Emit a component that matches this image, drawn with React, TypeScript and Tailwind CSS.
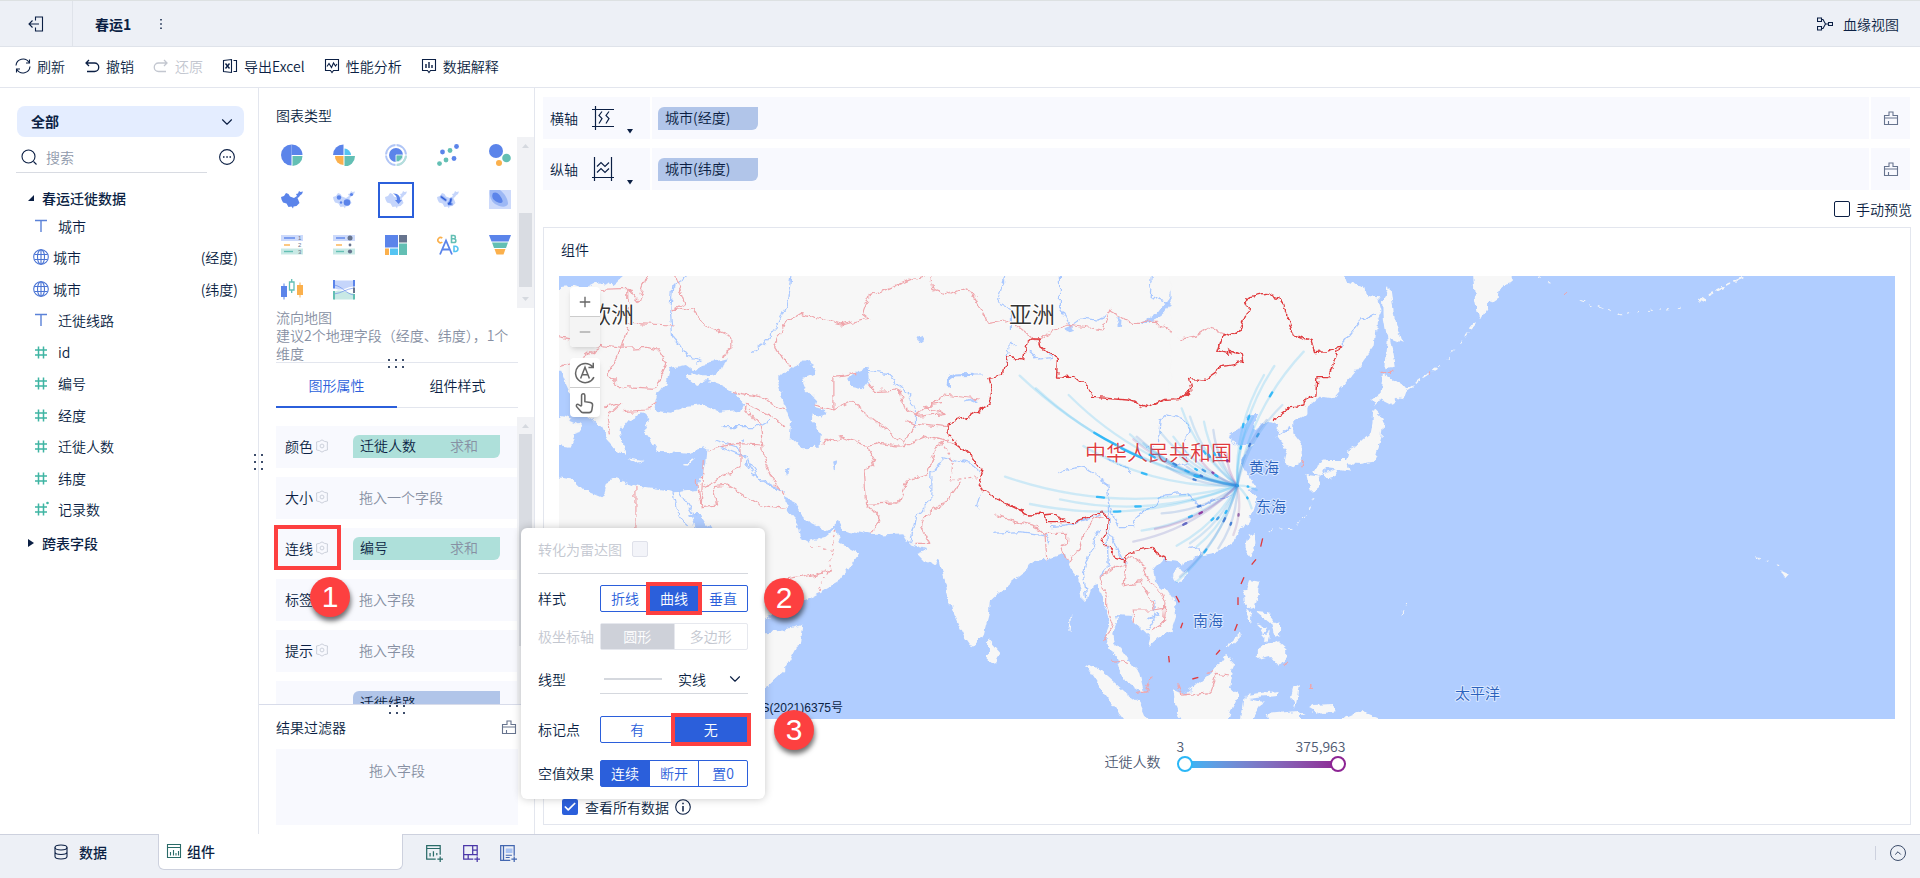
import { useId, type ReactNode } from "react";
import clsx from "clsx";
import { ChevronDown, ChevronUp, Check } from "lucide-react";

const INK = "#0b1f44";

/* ---------- small icons ---------- */

const Icon = ({
	size = 16,
	className,
	children,
}: {
	size?: number;
	className?: string;
	children: ReactNode;
}) => (
	<svg
		width={size}
		height={size}
		viewBox="0 0 16 16"
		fill="none"
		stroke="currentColor"
		strokeWidth="1.1"
		className={clsx("shrink-0", className)}
		aria-hidden="true"
	>
		{children}
	</svg>
);

const ExitIcon = () => (
	<Icon>
		<path d="M7.5 4.5V1h7v14h-7v-3.500" />
		<path d="M11 8H1M4.5 4.500L1 8l3.500 3.500" />
	</Icon>
);

const RefreshIcon = () => (
	<Icon>
		<path d="M1 7.5A7 7 0 0 1 14 4.500M15 8.500A7 7 0 0 1 2 11.500" />
		<path d="M14.500 1.500v3.500h-3.500M1.500 14.500V11h3.500" />
	</Icon>
);

const UndoIcon = ({ className }: { className?: string }) => (
	<Icon className={className}>
		<path d="M5 2L2 5l3 3M2 5h8.500a4 4 0 0 1 0 8.500H3" strokeWidth="1.3" />
	</Icon>
);

const ExcelIcon = () => (
	<Icon>
		<path d="M1.500 2.500l8-1v13l-8-1zM11.500 2.500h3v11h-3" />
		<path d="M3.500 5.500l4 5M7.500 5.500l-4 5" strokeWidth="1.4" />
	</Icon>
);

const PerfIcon = () => (
	<Icon>
		<path d="M1.500 1.500h13v11h-5L8 14.500l-1.500-2h-5z" />
		<path d="M3 8.500l2-3 2.500 4 2-4.500 2 3 1.500-2" />
	</Icon>
);

const ExplainIcon = () => (
	<Icon>
		<path d="M1.500 1.500h13v11h-5L8 14.500l-1.500-2h-5z" />
		<path d="M5 10V6M8 10V4M11 10V7" strokeWidth="1.4" />
	</Icon>
);

const LineageIcon = () => (
	<Icon>
		<path d="M.500 2h4v3.500h-4zM.500 10.500h4V14h-4zM11.500 6.500h4v3h-4zM4.500 3.500h1.500L8.500 8h3M8.500 8L6 12.500H4.500" />
	</Icon>
);

const SearchIcon = () => (
	<Icon className="text-[#0b1f44]">
		<circle cx="7.500" cy="7.500" r="6.500" />
		<path d="M12.500 12.500L15.500 15.500" />
	</Icon>
);

const BrushIcon = () => (
	<Icon className="text-[#67748e]">
		<path d="M1.500 14.500v-9h4.500v-3.500h4v3.500h4.500v9zM1.500 8h13M5.500 11v3.500" />
	</Icon>
);

const GearIcon = () => (
	<Icon size={14} className="text-[#c9ced8]">
		<path d="M8 1l3 1.800 3.300 .600L14 8l.300 4.500-3.300 .700L8 15l-3-1.800-3.300-.700L2 8l-.300-4.600L5 2.800z" />
		<circle cx="8" cy="8" r="2.200" />
	</Icon>
);

const TextFieldIcon = () => (
	<Icon className="text-[#5b82d8]">
		<path d="M2 2.500h12M8 2.500v11.500" strokeWidth="1.400" />
	</Icon>
);

const GlobeIcon = () => (
	<Icon className="text-[#4a74d4]">
		<circle cx="8" cy="8" r="7.300" />
		<ellipse cx="8" cy="8" rx="3.500" ry="7.300" />
		<path d="M1.500 5.500h13M1.500 10.500h13M8 .700v14.600" />
	</Icon>
);

const NumberIcon = ({ star }: { star?: boolean }) => (
	<Icon className="text-[#3fb5a3]">
		<path d="M5.500 2.500v12M10.500 2.500v12M2 6h12M2 11h12" strokeWidth="1.500" />
		{star && <circle cx="14.500" cy="2" r="1.300" fill="currentColor" stroke="none" />}
	</Icon>
);

const Dots = ({ vertical }: { vertical?: boolean }) => (
	<div
		className={clsx(
			"grid gap-x-[5px] gap-y-[5px]",
			vertical ? "grid-cols-2" : "grid-cols-3",
		)}
	>
		{[0, 1, 2, 3, 4, 5].map((i) => (
			<span key={i} className="size-[2px] bg-[#3d4d6b]" />
		))}
	</div>
);

/* ---------- chart type icons ---------- */

const B = "#5b84ea";
const G = "#63bfb4";
const O = "#fbb04c";
const C = "#55c4f2";
const L = "#c5d5fb";

const CHINA =
	"M0 8L3 7 5 4 7.500 5 9 7.500 13 9 16 7 15 5 17 4.500 18 2 19.500 3 22 2.500 21 5 19 6.500 18 8 16.500 9 17.500 11.500 18.500 14 15.500 17 12.500 17.500 12 19.500 10.500 17.500 7.500 18 5.500 14.500 2 13.500 .500 10.500z";

const chartIcons: { name: string; art: ReactNode }[] = [
	{
		name: "饼图",
		art: (
			<>
				<path d="M10.500 11.500V.500a10.500 10.500 0 1 0 0 21z" fill={B} />
				<path d="M10.500 .500a10.500 10.500 0 0 1 11 10.500h-11z" fill={B} />
				<path d="M11.500 12h10a10 10 0 0 1-10 10z" fill={G} />
			</>
		),
	},
	{
		name: "玫瑰图",
		art: (
			<>
				<path d="M10.500 11H0A10.500 10.500 0 0 1 10.500 .500z" fill={B} />
				<path d="M11.500 11V4.500a7 7 0 0 1 6.500 6.500z" fill={C} />
				<path d="M10.500 12H2a8.500 8.500 0 0 0 8.500 9z" fill={O} />
				<path d="M11.500 12H22a10.500 10.500 0 0 1-10.500 10.500z" fill={G} />
			</>
		),
	},
	{
		name: "多层饼图",
		art: (
			<>
				<circle cx="11" cy="11" r="10" fill="none" stroke="#b0c5f6" strokeWidth="1.800" />
				<path d="M21 11a10 10 0 0 1-10 10" fill="none" stroke="#b5e0da" strokeWidth="1.800" />
				<circle cx="11" cy="11" r="7" fill={B} />
				<path d="M11 11h7a7 7 0 0 1-7 7z" fill={G} stroke="#fff" strokeWidth=".800" />
				<path d="M11 0v3M0 11h3M19 11h3M11 19v3" stroke="#fff" />
			</>
		),
	},
	{
		name: "散点图",
		art: (
			<>
				<circle cx="19.500" cy="2.500" r="2.400" fill={B} />
				<circle cx="13" cy="6.500" r="2.400" fill={G} />
				<circle cx="5.500" cy="8" r="2.400" fill={B} />
				<circle cx="17" cy="14.500" r="2.400" fill={B} />
				<circle cx="9" cy="16" r="2.400" fill={G} />
				<circle cx="2.500" cy="19.600" r="2.400" fill={G} />
			</>
		),
	},
	{
		name: "聚合气泡图",
		art: (
			<>
				<circle cx="7" cy="7" r="7" fill={B} />
				<circle cx="17.500" cy="14" r="4.300" fill={G} />
				<circle cx="10" cy="19" r="3" fill={O} />
			</>
		),
	},
	{ name: "区域地图", art: <path d={CHINA} fill={B} /> },
	{
		name: "点地图",
		art: (
			<>
				<path d={CHINA} fill={L} />
				<circle cx="6" cy="8.500" r="2.200" fill={B} />
				<circle cx="14" cy="13.500" r="3.300" fill={B} />
				<circle cx="18.500" cy="5.500" r="1.600" fill={B} />
				<circle cx="8" cy="13.500" r="1.200" fill={B} />
			</>
		),
	},
	{
		name: "流向地图",
		art: (
			<>
				<path d={CHINA} fill={L} />
				<path d="M8 4.500c5-.500 7.500 3 7 6.500l2 0-3.500 4-3.500-4h2c0-3-1-5-4-6.500z" fill={B} />
			</>
		),
	},
	{
		name: "热力地图",
		art: (
			<>
				<path d={CHINA} fill={L} />
				<path d="M4.500 8l4 3M14 10c0 3-1 4-3 5h3.500" stroke={B} strokeWidth="3.200" fill="none" strokeLinecap="round" opacity=".500" />
				<path d="M4.500 8l4 3M14 10c0 3-1 4-3 5h3" stroke="#2f5fd8" strokeWidth="1.500" fill="none" strokeLinecap="round" />
			</>
		),
	},
	{
		name: "热力区域图",
		art: (
			<>
				<path d="M0 1h22v19H0z" fill="#cddafb" />
				<path d="M1 1h10c5 4 8 9 8 14-2 4-8 3-13 0-4-3-6-8-5-14z" fill="#9db8f5" />
				<path d="M4 4c4-2 7 2 9 6 2 4-1 5-5 3-4-2-6-5-4-9z" fill={B} />
			</>
		),
	},
	{
		name: "分组表",
		art: (
			<>
				<path d="M0 1h22v6H0z" fill="#cddafb" />
				<path d="M0 14.500h22v6H0z" fill="#c8e9e5" />
				<path d="M3 4h11" stroke={B} strokeWidth="1.400" />
				<path d="M3 11h6" stroke={O} strokeWidth="1.400" />
				<path d="M3 17.500h9" stroke={G} strokeWidth="1.400" />
				<g fill="#67748e" fontSize="6" fontFamily="Liberation Sans">
					<text x="17" y="6">1</text>
					<text x="17" y="13">2</text>
					<text x="17" y="20">3</text>
				</g>
			</>
		),
	},
	{
		name: "交叉表",
		art: (
			<>
				<path d="M0 1h22v6H0z" fill="#cddafb" />
				<path d="M0 14.500h22v6H0z" fill="#c8e9e5" />
				<path d="M3 4h9" stroke={B} strokeWidth="1.400" />
				<path d="M3 11h6" stroke={O} strokeWidth="1.400" />
				<path d="M3 17.500h8" stroke={G} strokeWidth="1.400" />
				<g fill="#67748e">
					<circle cx="17" cy="4" r="2.500" />
					<circle cx="17" cy="11" r="1.400" />
					<circle cx="17" cy="17.500" r="2.100" />
				</g>
			</>
		),
	},
	{
		name: "矩形树图",
		art: (
			<>
				<path d="M0 1h13v12.500H0z" fill={B} />
				<path d="M14 1h8v7.500h-8z" fill="#67748e" />
				<path d="M14 9.500h8V21h-8z" fill={G} />
				<path d="M0 14.500h4V21H0z" fill={O} />
				<path d="M5 14.500h8V21H5z" fill={C} />
			</>
		),
	},
	{
		name: "词云",
		art: (
			<g fill="none" strokeWidth="1.600">
				<path d="M3 20.500L9 6.500l6 14M5.200 15.500h7.600" stroke={B} strokeWidth="1.800" />
				<path d="M5.300 4.200A2.600 2.600 0 1 0 5.300 8" stroke={O} />
				<path d="M14.500 1.500v7h2.500a1.800 1.800 0 0 0 0-3.700h-2.500h2.200a1.600 1.600 0 0 0 0-3.300z" stroke={G} />
				<path d="M17 12.200v5.300h1.300a2.600 2.600 0 0 0 0-5.300z" stroke={C} />
			</g>
		),
	},
	{
		name: "漏斗图",
		art: (
			<>
				<path d="M0 1h22l-2.500 6.500h-17z" fill={B} />
				<path d="M3 8.500h16l-2 5.500H5z" fill={G} />
				<path d="M5.500 15h11l-2 5.500h-7z" fill={O} />
			</>
		),
	},
	{
		name: "箱形图",
		art: (
			<>
				<path d="M0 7h2.500V4.500h1V7H6v11H3.500v2.500h-1V18H0z" fill={B} />
				<path d="M8.500 3h4.500v8H8.500zM10.700 0v3M10.700 11v3" fill="none" stroke={G} strokeWidth="1.300" />
				<path d="M16 6h2.500V3.500h1V6H22v10h-2.500v2.500h-1V16H16z" fill={O} />
			</>
		),
	},
	{
		name: "桑基图",
		art: (
			<>
				<path d="M1 1.500h20v6C13 8 9 13 1 9z" fill={L} />
				<path d="M1 20.500h20v-6C13 14.500 9 9 1 13z" fill="#c8e9e5" />
				<path d="M1 6c8 1 12 9 20 10M1 15c8-1 12-5 20-6" stroke={B} opacity=".600" fill="none" />
				<path d="M0 1h2v8.500H0zM20 1h2v6.500h-2z" fill={B} />
				<path d="M0 12h2v8.500H0zM20 15h2v5.500h-2z" fill={G} />
				<path d="M20 8.500h2V14h-2z" fill="#67748e" />
			</>
		),
	},
];

/* ---------- panels ---------- */

const tools = [
	{ icon: <RefreshIcon />, label: "刷新" },
	{ icon: <UndoIcon />, label: "撤销" },
	{ icon: <UndoIcon className="-scale-x-100" />, label: "还原", disabled: true },
	{ icon: <ExcelIcon />, label: "导出Excel" },
	{ icon: <PerfIcon />, label: "性能分析" },
	{ icon: <ExplainIcon />, label: "数据解释" },
];

const fields = [
	{ type: "text", name: "城市" },
	{ type: "geo", name: "城市", note: "(经度)" },
	{ type: "geo", name: "城市", note: "(纬度)" },
	{ type: "text", name: "迁徙线路" },
	{ type: "num", name: "id" },
	{ type: "num", name: "编号" },
	{ type: "num", name: "经度" },
	{ type: "num", name: "迁徙人数" },
	{ type: "num", name: "纬度" },
	{ type: "count", name: "记录数" },
];

const FieldPanel = () => (
	<aside className="w-[259px] shrink-0 border-r border-[#e3e6ee] pt-[18px]">
		<div className="relative ml-[17px] w-[227px]">
			<select
				aria-label="数据范围"
				className="h-[31px] w-full appearance-none rounded-lg bg-[#e4edff] px-[14px] pb-[2px] font-bold"
			>
				<option>全部</option>
			</select>
			<ChevronDown
				size={18}
				strokeWidth={1.5}
				className="pointer-events-none absolute top-[7px] right-2"
			/>
		</div>
		<div className="mt-1 ml-4 flex items-center">
			<label className="flex h-8 w-[191px] items-center gap-[9px] border-b border-[#d8dbe2] pl-[5px]">
				<SearchIcon />
				<input
					placeholder="搜索"
					aria-label="搜索"
					className="w-full placeholder:text-[#8f99ab] focus:outline-none"
				/>
			</label>
			<button aria-label="更多" className="ml-3">
				<Icon>
					<circle cx="8" cy="8" r="7.400" />
					<path d="M4 8h1.500M7.300 8h1.500M10.500 8h1.500" strokeWidth="1.500" />
				</Icon>
			</button>
		</div>
		<button className="mt-[15px] ml-7 flex h-5 items-center gap-2 font-medium">
			<svg width="6" height="6" viewBox="0 0 6 6" aria-hidden="true">
				<path d="M6 0v6H0z" fill={INK} />
			</svg>
			春运迁徙数据
		</button>
		<ul className="mt-[2px] grid h-[315px] auto-rows-fr">
			{fields.map((f, i) => (
				<li
					key={i}
					className={clsx(
						"flex items-center pr-5 pl-[33px]",
						f.type === "geo" ? "gap-1" : "gap-[9px]",
					)}
				>
					{f.type === "text" && <TextFieldIcon />}
					{f.type === "geo" && <GlobeIcon />}
					{f.type === "num" && <NumberIcon />}
					{f.type === "count" && <NumberIcon star />}
					<span className="flex-1">{f.name}</span>
					{f.note}
				</li>
			))}
		</ul>
		<button className="mt-2 ml-7 flex h-5 items-center gap-2 font-medium">
			<svg width="6" height="8" viewBox="0 0 6 8" aria-hidden="true">
				<path d="M0 0l6 4-6 4z" fill={INK} />
			</svg>
			跨表字段
		</button>
	</aside>
);

const ScrollBar = ({ thumb, down }: { thumb: string; down?: boolean }) => (
	<div className="relative w-[17px] shrink-0 bg-[#f1f2f5]">
		<svg width="17" height="17" viewBox="0 0 17 17" aria-hidden="true">
			<path d="M5 11l3.500-4 3.500 4z" fill="#d5d9df" />
		</svg>
		<div className={clsx("absolute left-[2px] w-[13px] bg-[#d9dce2]", thumb)} />
		{down && (
			<svg width="17" height="17" viewBox="0 0 17 17" className="absolute bottom-0" aria-hidden="true">
				<path d="M5 6l3.500 4 3.500-4z" fill="#d5d9df" />
			</svg>
		)}
	</div>
);

const attributes = [
	{ label: "颜色", field: "迁徙人数", agg: "求和" },
	{ label: "大小", hint: "拖入一个字段" },
	{ label: "连线", field: "编号", agg: "求和", marked: true },
	{ label: "标签", hint: "拖入字段" },
	{ label: "提示", hint: "拖入字段" },
];

const Pill = ({ className, children }: { className?: string; children: ReactNode }) => (
	<div
		className={clsx(
			"flex h-[23px] items-center rounded-tl-md rounded-br-md px-[7px] pb-[2px]",
			className,
		)}
	>
		{children}
	</div>
);

const Marker = ({ n, className }: { n: number; className?: string }) => (
	<span
		className={clsx(
			"absolute z-20 flex size-10 items-center justify-center rounded-full bg-[#fd4040] font-['Liberation_Sans',sans-serif] text-3xl text-white shadow-[1px_4px_5px_rgba(0,0,0,0.55)]",
			className,
		)}
	>
		{n}
	</span>
);

const ChartPanel = () => (
	<section className="flex w-[276px] shrink-0 flex-col border-r border-[#e3e6ee]">
		<h2 className="mt-[17px] ml-[17px] h-5 leading-5">图表类型</h2>
		<div className="mt-3 flex h-[171px]">
			<div className="ml-[7px] grid flex-1 grid-cols-[repeat(5,52px)] content-start gap-y-[9px] overflow-hidden">
				{chartIcons.map((c) => (
					<button
						key={c.name}
						aria-label={c.name}
						className={clsx(
							"mx-2 flex h-9 items-center justify-center",
							c.name === "流向地图" && "border-2 border-[#2b5fdb]",
						)}
					>
						<svg width="22" height="22" viewBox="0 0 22 22" className="shrink-0" aria-hidden="true">
							{c.art}
						</svg>
					</button>
				))}
			</div>
			<ScrollBar thumb="top-[76px] h-[74px]" down />
		</div>
		<div className="relative mr-4 ml-[17px] h-[55px] border-b border-[#e3e6ee] leading-[18px] text-[#8790a3]">
			<p>流向地图</p>
			<p>建议2个地理字段（经度、纬度），1个维度</p>
			<div className="absolute -bottom-[6px] left-1/2 -ml-[9px]">
				<Dots />
			</div>
		</div>
		<div className="mr-4 ml-[17px] flex h-[45px] border-b border-[#e3e6ee]">
			<button className="-mb-px flex-1 border-b-2 border-[#2b5fdb] text-[#2b5fdb]">图形属性</button>
			<button className="flex-1">组件样式</button>
		</div>
		<div className="mt-[9px] flex h-[287px] overflow-hidden">
			<ul className="ml-[17px] flex flex-1 flex-col gap-[9px] pt-[9px]">
				{attributes.map((a) => (
					<li
						key={a.label}
						className="relative flex h-[42px] shrink-0 items-center bg-[#f8f9fe] pb-[2px] pl-[9px]"
					>
						<span>{a.label}</span>
						<button aria-label={`${a.label}设置`} className="ml-[2px]">
							<GearIcon />
						</button>
						{a.field ? (
							<Pill className="ml-6 w-[147px] bg-[#aee0da]">
								<span className="flex-1">{a.field}</span>
								<span className="mr-[15px] text-[#8790a3]">{a.agg}</span>
							</Pill>
						) : (
							<span className="ml-[30px] text-[#8790a3]">{a.hint}</span>
						)}
						{a.marked && (
							<span className="absolute -top-[3px] -left-[2px] h-[45px] w-[67px] border-4 border-[#fd4040]" />
						)}
					</li>
				))}
				<li className="h-[42px] shrink-0 bg-[#f8f9fe] pt-[10px] pl-[77px]">
					<Pill className="w-[147px] bg-[#b1c5e9]">迁徙线路</Pill>
				</li>
			</ul>
			<ScrollBar thumb="top-[17px] h-[212px]" />
		</div>
		<div className="relative flex min-h-0 flex-1 flex-col border-t border-[#d8dcea] pr-4 pb-[9px] pl-[17px]">
			<div className="absolute top-0 left-1/2 -ml-2">
				<Dots />
			</div>
			<div className="flex h-11 items-center justify-between pr-px">
				<h2>结果过滤器</h2>
				<button aria-label="清空过滤器">
					<BrushIcon />
				</button>
			</div>
			<div className="min-h-[60px] flex-1 bg-[#f8f9fe] pt-[11px] text-center text-[#8790a3]">拖入字段</div>
		</div>
	</section>
);

/* ---------- map ---------- */

// [start x, start y, position of the bright head 0-100, colour]
const flows: [number, number, number, string][] = [
	[59, -73, 38, "#27b5f7"],
	[108, -35, 46, "#27b5f7"],
	[206, -15, 52, "#27b5f7"],
	[15, 230, 40, "#27b5f7"],
	[90, 312, 40, "#27b5f7"],
	[180, 298, 42, "#27b5f7"],
	[250, 138, 40, "#27b5f7"],
	[390, 103, 55, "#27b5f7"],
	[400, 118, 62, "#8d5fb5"],
	[410, 110, 40, "#3b78d0"],
	[430, 130, 60, "#27b5f7"],
	[480, 95, 60, "#3b9be5"],
	[470, 160, 50, "#27b5f7"],
	[545, 25, 50, "#27b5f7"],
	[570, 50, 50, "#3b9be5"],
	[612, 65, 45, "#27b5f7"],
	[640, 90, 40, "#3b78d0"],
	[600, 180, 38, "#8e2a98"],
	[680, 160, 20, "#8e2a98"],
	[520, 110, 70, "#27b5f7"],
	[500, 200, 40, "#3b78d0"],
	[540, 170, 30, "#27b5f7"],
	[560, 200, 30, "#3b78d0"],
	[485, 340, 45, "#3b78d0"],
	[425, 392, 46, "#27b5f7"],
	[465, 387, 50, "#8e2a98"],
	[400, 425, 44, "#5a5fc0"],
	[530, 437, 50, "#27b5f7"],
	[570, 430, 48, "#3b9be5"],
	[530, 545, 35, "#27b5f7"],
	[540, 530, 65, "#3b78d0"],
	[590, 440, 60, "#27b5f7"],
	[655, 445, 40, "#3b78d0"],
	[700, 405, 40, "#8e5fa5"],
	[755, 325, 40, "#27b5f7"],
	[770, 270, 45, "#27b5f7"],
	[911, -145, 34, "#27b5f7"],
	[823, -102, 44, "#27b5f7"],
	[792, -75, 46, "#27b5f7"],
	[847, 15, 40, "#3b9be5"],
	[800, 60, 40, "#3b78d0"],
	[760, 50, 45, "#27b5f7"],
];

const HUB = { x: 712, y: 257 };

const flowPath = (x: number, y: number) => {
	const dx = HUB.x - x;
	const dy = HUB.y - y;
	const cx = Math.round((x + HUB.x) / 2 - dy * 0.15);
	const cy = Math.round((y + HUB.y) / 2 + dx * 0.15);
	return `M${x} ${y}Q${cx} ${cy} ${HUB.x} ${HUB.y}`;
};

const seaLabels = [
	{ x: 1249, y: 473, text: "黄海" },
	{ x: 1256, y: 512, text: "东海" },
	{ x: 1193, y: 626, text: "南海" },
	{ x: 1455, y: 699, text: "太平洋" },
];

const FlowMap = () => {
	const rough = useId();
	return (
		<svg
			viewBox="559 276 1336 443"
			preserveAspectRatio="xMidYMid slice"
			className="absolute inset-0 size-full"
			role="img"
			aria-label="流向地图"
		>
			<defs>
				<filter id={rough} x="559" y="276" width="1336" height="443" filterUnits="userSpaceOnUse">
					<feTurbulence type="fractalNoise" baseFrequency="0.11" numOctaves="3" seed="4" />
					<feDisplacementMap in="SourceGraphic" scale="8" xChannelSelector="R" yChannelSelector="G" />
				</filter>
			</defs>
			<rect x="559" y="276" width="1336" height="443" fill="#b0cdff" />
			<g filter={`url(#${rough})`}>
				{/* west: Europe, Middle East, India */}
				<g transform="translate(540 260) scale(.40816 .33333)">
					<path
						fill="#f7f7f7"
						d="M0 0H1620V460H1160V950L1150 958 1102 1020 1100 1060 1085 1130 1060 1165 1040 1130 1010 1050 985 930 975 880 980 890 970 915 945 905 925 880 950 868 905 850 890 820 815 825 740 808 730 785 705 812 665 790 640 760 620 725 603 715 605 750 630 790 640 835 655 845 700 830 725 805 735 850 782 880 760 920 735 960 680 1000 620 1040 540 1080V1115L600 1108 645 1095 640 1140 600 1230 540 1300H0z"
					/>
					<g fill="#b0cdff">
						<path d="M0 0H200V55L180 75 150 65 110 90 85 80 47 84 0 90z" />
						<path d="M0 335H52L60 360 75 400 100 455 130 480 150 500 165 540 190 575 210 585 200 545 195 510 215 480 250 460 268 480 255 510 272 540 290 572 330 575 370 578 408 562 405 610 385 690 330 697 240 680 185 655 162 668 152 712 110 690 85 660 40 650V555L75 560 88 525 105 495 60 470 0 460z" />
						<path d="M282 440L290 400 310 370 318 325 355 315 378 335 360 355 380 375 405 360 440 375 480 400 498 430 490 450 440 455 400 435 360 440 320 455 290 450z" />
						<path d="M365 335L400 312 455 295 445 330 410 350 385 345z" />
						<path d="M580 360L615 320 655 300 674 315 670 345 640 360 650 390 675 420 670 440 700 450 695 470 668 460 665 490 688 520 685 560 640 562 612 530 615 490 600 440 590 400z" />
						<path d="M758 355L780 330 805 320 808 360 790 388 760 380z" />
						<path d="M1472 195L1510 160 1540 110 1560 40H1572L1560 110 1530 160 1490 195z" />
						<path d="M368 762L395 762 420 810H380z" />
						<path d="M1040 425L1065 415 1070 425 1045 430zM1290 205l14-8 4 16-14 4zM1415 172l8-6-2 34-6 2zM600 625l12-8-4 28zM715 605l14-4-8 34zM490 540l10-6-4 14zM920 235l14-8 4 14-12 6z" />
					</g>
					<path fill="#f7f7f7" d="M212 592L255 600 235 607zM348 612L378 597 362 614zM1098 1138L1128 1180 1115 1208 1097 1200z" />
					<g fill="none" stroke="#a9c8ff" strokeWidth="1.200">
						<path vectorEffect="non-scaling-stroke" d="M360 50L325 80 320 160 325 230 365 290 395 300 380 310M615 48L605 130 575 210 550 250 520 275M1000 375L1010 345 1085 345M1140 48L1120 125 1155 150 1155 210M1275 48L1275 150 1300 200 1330 175 1370 180 1385 160M1500 48L1495 110 1540 130M800 330L850 340 900 400 920 460 920 500M1140 320L1150 250 1165 260M1200 275L1225 300 1250 295 1245 275" />
						<path vectorEffect="non-scaling-stroke" d="M440 560L500 590 540 660 600 700M450 500L530 500 560 480M430 540L480 560 520 640 590 690M325 690L335 760 360 800M340 690L380 770M1120 690L1100 660 1050 610 990 590 960 640 960 720 920 770 905 850M1080 700L1070 740 1110 790 1170 820 1250 810 1380 760" />
						<path vectorEffect="non-scaling-stroke" strokeWidth="3" d="M1003 385L1003 355 1018 345 1060 343" />
					</g>
					<g fill="none" stroke="#efa5ab" strokeWidth="1.200" strokeLinejoin="round">
						<path vectorEffect="non-scaling-stroke" d="M110 90L215 85 240 125 262 48M215 85L215 190 330 195M330 48L355 130 325 150 350 145 375 150 400 195 470 230 470 270 445 290M200 265L215 200M47 230L140 255 200 265 260 262 290 270 310 310 285 380M47 320L100 300 145 260M200 265L165 340 200 380 285 385M165 470L200 430 160 440M165 470L170 520M205 455L260 450 285 430" />
						<path vectorEffect="non-scaling-stroke" d="M610 320L575 260 600 190 640 160 740 195 780 180 805 175 790 160 805 110 915 55 945 48M955 48L960 85 1000 105 1045 80 1100 190 1150 180 1215 240M1215 240L1290 195 1380 210 1395 150 1450 190 1510 190 1568 230" />
						<path vectorEffect="non-scaling-stroke" d="M670 435L720 450V350L775 340M720 450L760 425 890 550 920 490 900 480M805 370L820 395 880 390 890 440 920 470 990 405 1100 420M920 490L1000 500M920 470L990 460 940 440 990 430M690 550L740 530 800 560 830 550 890 560 950 530 1015 550M800 560L820 600 795 640 800 730 880 725 900 660 950 640 970 560 1000 540M800 730L835 780 810 825" />
						<path vectorEffect="non-scaling-stroke" d="M470 395L540 410 600 450M500 430L560 460 600 500M500 440L540 500 550 600 575 670 600 710M410 570L480 550 545 555M490 550L490 620 400 680M385 660L395 740 435 735 425 680 460 675 540 735 600 745M235 680V805M400 600L395 740M600 960L650 950 715 930" />
						<path vectorEffect="non-scaling-stroke" strokeDasharray="3 3" d="M725 810L710 870 665 860M715 880L710 930 680 1000M990 560L1010 600 1005 660 1070 650" />
						<path vectorEffect="non-scaling-stroke" d="M1030 665L1000 720 940 770 935 800 955 850 915 850M1110 715L1100 750 1150 780 1235 795M1235 775L1230 830 1240 895M1290 850L1300 915" />
					</g>
				</g>

				{/* north east Asia and the Pacific */}
				<g transform="translate(1180 260) scale(.47193 .33333)" fill="#f7f7f7">
					<path d="M-20 20H345L355 65 390 80 395 110 420 115 427 150 415 190 410 260 385 310 350 370 325 412 298 408 270 440 270 460 240 485 240 520 262 560 262 600 240 622 222 610 228 570 205 530 210 495 190 487 155 510 165 465 145 465 118 500 0 620H-20z" />
					<path d="M430 110L445 75 455 180 470 248 445 235 455 320 435 325 440 240 432 180zM620 20H705V65L680 75 675 110 655 130 635 180 625 120z" />
					<path d="M430 340L480 385 475 405 450 432 425 415 410 440 405 420 425 400zM410 450L432 480 427 530 415 590 410 605 380 612 355 610 360 635 340 630 310 625 300 650 275 635 310 600 350 600 355 570 380 550 405 520 408 480zM268 645L298 650 290 690 275 692zM305 640L338 625 325 648 310 655z" />
					<path d="M160 822L162 850 148 892 137 865 145 830zM145 960L170 965 165 1000 155 1050 140 1045 135 1005zM160 1055L185 1060 200 1085 185 1085zM165 1095L185 1110 175 1120zM195 1080L212 1085 212 1130 200 1120zM172 1125L190 1115 185 1145zM165 1165L205 1140 225 1165 225 1190 210 1218 190 1185 165 1195zM140 1050L155 1060 150 1088z" />
					<path d="M98 1160L130 1115 133 1120 104 1163zM335 1380L380 1352 430 1380zM285 1335L325 1332 330 1360 300 1365 275 1345zM240 1285L252 1275 245 1340 235 1310zM250 1355L270 1358 255 1362z" />
					<path d="M1275 930L1290 940 1282 952 1274 945zM1262 912l10 4-6 4zM1245 900l5 2-4 4zM1218 886l10 2-6 6z" />
					<g fill="none" stroke="#f7f7f7" strokeLinecap="round">
						<path vectorEffect="non-scaling-stroke" strokeWidth="2" strokeDasharray="7 5 3 6" d="M480 385L550 320M615 208L630 182M1100 122L1160 75 1200 48" />
						<path vectorEffect="non-scaling-stroke" strokeWidth="1" strokeDasharray="3 7" d="M550 320L590 260 615 205M848 122L935 165 1060 142M760 48L790 70M285 710L270 760 240 805 180 810M195 1370L280 1355M480 1030L470 1065" />
					</g>
					<path stroke="#a9c8ff" fill="none" vectorEffect="non-scaling-stroke" d="M340 258L362 220 385 180 415 160" strokeWidth="1.500" />
				</g>

				{/* China coast and south east Asia */}
				<g transform="translate(1000 400) scale(.33333)" fill="#f7f7f7">
					<path d="M-60 -30H745L745 45 720 85 690 108 712 140 762 132 745 155 720 175 725 195 755 240 772 265 742 270 772 290 762 330 732 380 700 425 660 455 600 467 550 485 545 500 530 482 490 478 460 510 465 545 500 570 525 610 528 650 515 690 475 712 445 740 450 710 430 690 400 665 390 645 350 642 355 660 340 700 345 730 370 765 395 785 418 820 432 880 385 850 360 810 350 765 325 745 318 700 330 670 320 640 305 590 290 555 275 560 265 590 248 597 240 560 230 530 205 500 195 460 150 475 100 480 80 510 30 550 -60 630z" />
					<path d="M515 525L535 508 560 515 548 545 522 545zM255 795L300 810 380 880 420 910 442 960H375L310 875zM520 870L555 885 640 815 680 762 705 792 690 860 717 885 700 920 685 965H545L525 910zM722 965L735 885 830 873 826 888 742 897 792 905 755 965zM880 870L892 860 885 930zM210 640l4 0-6 60-3-10zM800 945l100-10v30h-90z" />
					<g fill="none" stroke="#a9c8ff" strokeWidth="4">
						<path d="M435 145L475 130 480 60 500 42 545 55 568 75 550 130 560 190 520 200M175 215L250 200 320 250 330 320 355 380 400 380 410 350 460 320 490 285 560 280 600 320 640 300 700 285M300 160L350 190 395 215M325 320L330 400 360 470 380 490M150 380L200 375 300 345M300 390L270 460 250 520 260 590M320 380L325 500 300 530M-20 400L60 395 140 405 150 430M565 445L600 440 605 465M460 600L465 650 440 690M830 105L870 80M480 640L440 660" />
					</g>
					<g fill="none" stroke="#efa5ab" strokeWidth="3.500">
						<path d="M-20 345L60 370 120 385 135 400 140 475M130 400L200 400 200 430 180 440 205 490 240 440 255 390 290 355 310 350M300 530L340 505 375 490M300 530L320 590 320 620 340 680 310 720M375 490L370 555 420 545 450 590 460 630 400 630 400 665M375 490L395 470 440 500 430 530 480 570 495 610 490 670 450 695M460 630L495 625M335 780L385 790M410 880L440 875 450 830M530 850L545 885 630 875 650 820 690 825M620 820L640 815" />
					</g>
				</g>

				{/* national border */}
				<g fill="none" stroke="#e0393c" strokeWidth="1.400" strokeLinejoin="round">
					<g transform="translate(540 260) scale(.40816 .33333)">
						<path vectorEffect="non-scaling-stroke" d="M1568 416L1530 418 1490 442 1440 420 1355 412 1340 380 1310 350 1268 348 1270 300 1225 255 1220 237H1207L1190 255 1185 300 1145 292 1135 345 1100 352 1108 390 1100 430 1050 470 1000 490V518" />
						<path vectorEffect="non-scaling-stroke" strokeDasharray="3 2" d="M1000 518L1018 550" />
						<path vectorEffect="non-scaling-stroke" d="M1015 550L1060 590 1085 630 1075 665 1085 695 1120 715 1150 735 1200 765 1235 762 1240 785 1310 785 1375 755 1390 770 1388 815 1375 840 1400 870 1410 895 1435 905 1440 880 1495 865 1535 900M1235 765L1260 762 1290 785" />
					</g>
					<g transform="translate(1180 260) scale(.47193 .33333)">
						<path vectorEffect="non-scaling-stroke" d="M0 418L25 385 20 355 50 360 90 320 133 308 130 285 105 270 100 280 78 272 90 220 105 225 125 210 145 150 137 125 150 110 180 100 213 115 240 222 278 245 285 278 310 275 340 260 330 290 315 350 290 350 288 405 270 410 262 435 235 440 195 482" />
						<path vectorEffect="non-scaling-stroke" stroke="#efa5ab" d="M0 237L35 228 60 205 90 218" />
						<path vectorEffect="non-scaling-stroke" stroke="#efa5ab" d="M425 337H452M812 105L820 95M530 335L534 344M258 625L262 605M275 1272V1282H286M222 1215L226 1206" />
					</g>
				</g>
			</g>
			<g transform="translate(1000 400) scale(.33333)" stroke="#e0393c" strokeWidth="4">
				<path d="M788 415L782 440M768 478L755 494M732 532L723 552M714 592V615M712 672L704 692M660 750L648 764M595 832L577 837M528 588L538 607M548 668L542 685M506 768L508 787" />
			</g>

			<g
				fontFamily="'Noto Sans CJK SC', sans-serif"
				stroke="#fff"
				strokeWidth="2"
				strokeLinejoin="round"
				paintOrder="stroke"
			>
				<g fontSize="23" fill="#333">
					<text x="588" y="323">欧洲</text>
					<text x="1009" y="323">亚洲</text>
				</g>
				<text x="1085" y="460" fontSize="21" fill="#e0393c">
					中华人民共和国
				</text>
				<g fontSize="15" fill="#2a62bd" stroke="#dce9ff">
					{seaLabels.map((s) => (
						<text key={s.text} x={s.x} y={s.y}>
							{s.text}
						</text>
					))}
				</g>
			</g>

			<g transform="translate(1000 400) scale(.33333)" fill="none" strokeLinecap="round">
				{flows.map(([x, y, head, color], i) => (
					<g key={i} stroke={color}>
						<path d={flowPath(x, y)} strokeWidth="7" opacity=".2" />
						<path
							d={flowPath(x, y)}
							pathLength="100"
							strokeWidth="7"
							strokeDasharray={x < 110 && y < 0 ? "10 200" : "3 200"}
							strokeDashoffset={-head}
							opacity=".9"
						/>
					</g>
				))}
			</g>
			<text
				x="843"
				y="712"
				textAnchor="end"
				fontSize="12"
				fill={INK}
				fontFamily="'Liberation Sans', 'Noto Sans CJK SC', sans-serif"
			>
				GS(2021)6375号
			</text>
		</svg>
	);
};

const MapControls = () => (
	<div className="absolute top-[11px] left-[11px] flex w-[30px] flex-col gap-[11px] text-[#666]">
		<div className="rounded bg-white shadow-md">
			<button aria-label="放大" className="flex h-[30px] w-full items-center justify-center border-b border-[#ccc]">
				<Icon size={12}>
					<path d="M8 1v14M1 8h14" strokeWidth="1.800" />
				</Icon>
			</button>
			<button
				aria-label="缩小"
				className="flex h-[30px] w-full items-center justify-center rounded-b bg-[#f4f4f4] text-[#bbb]"
			>
				<Icon size={12}>
					<path d="M1 8h14" strokeWidth="2.500" />
				</Icon>
			</button>
		</div>
		<div className="rounded bg-white shadow-md">
			<button aria-label="自适应" className="flex h-[30px] w-full items-center justify-center border-b border-[#ccc]">
				<Icon size={22}>
					<path d="M13.500 3.500A7 7 0 1 0 14.500 11M14 .500v3.500h-3.500" />
					<path d="M4.800 12L8 3.800 11.200 12M6 9.200h4" />
				</Icon>
			</button>
			<button aria-label="拖拽" className="flex h-[29px] w-full items-center justify-center">
				<Icon size={22}>
					<path d="M5.500 10V2.500a1.200 1.200 0 0 1 2.400 0v4.500l4 .700q1.800 .300 1.600 2L13 13q-.300 2-2 2H6.500q-1 0-1.800-1.200L1.800 10.500q-.400-1.700 1.200-1.500l2.500 1.500" />
				</Icon>
			</button>
		</div>
	</div>
);

/* ---------- right side ---------- */

const axes = [
	{
		label: "横轴",
		field: "城市(经度)",
		art: <path d="M3.500 0v24M0 3.500h22M0 20.500h22M10 5.500l-3 4 3 3-3 5M17 5.500l-3 4 3 3-3 5" />,
	},
	{
		label: "纵轴",
		field: "城市(纬度)",
		art: <path d="M2.500 0v24M19.500 0v24M0 20.500h22M5 9.500l4-4 4 4 4-4M5 15.500l4-4 4 4 4-4" />,
	},
];

const AxisRow = ({ axis }: { axis: (typeof axes)[number] }) => (
	<div className="flex h-[42px] gap-[2px]">
		<div className="flex w-[107px] items-center bg-[#f8f9fe] pl-[7px]">
			{axis.label}
			<button aria-label={`${axis.label}设置`} className="ml-[14px] flex items-end gap-3">
				<svg
					width="23"
					height="24"
					viewBox="0 0 23 24"
					fill="none"
					stroke={INK}
					strokeWidth="1.200"
					aria-hidden="true"
				>
					{axis.art}
				</svg>
				<svg width="6" height="5" viewBox="0 0 6 5" className="-mb-1" aria-hidden="true">
					<path d="M0 0h6L3 4.500z" fill={INK} />
				</svg>
			</button>
		</div>
		<div className="flex flex-1 items-center bg-[#f8f9fe] pl-[6px]">
			<Pill className="w-[100px] bg-[#b1c5e9]">{axis.field}</Pill>
		</div>
		<button
			aria-label={`清空${axis.label}`}
			className="mr-[2px] flex w-[39px] items-center justify-center bg-[#f8f9fe]"
		>
			<BrushIcon />
		</button>
	</div>
);

const rangeInput =
	"pointer-events-none absolute inset-0 w-full appearance-none bg-transparent [&::-webkit-slider-thumb]:size-4 [&::-webkit-slider-thumb]:appearance-none [&::-webkit-slider-thumb]:rounded-full [&::-webkit-slider-thumb]:border-2 [&::-webkit-slider-thumb]:bg-white";

const Legend = () => (
	<div className="mt-[18px] mr-1 flex items-end justify-center gap-4 text-[#4f5b73]">
		<span className="leading-[22px]">迁徙人数</span>
		<div className="w-[169px]">
			<div className="flex justify-between leading-[18px]">
				<span>3</span>
				<span>375,963</span>
			</div>
			<div className="relative mt-px h-4">
				<div className="absolute inset-x-2 top-[5px] h-[7px] bg-linear-to-r from-[#2bb7f7] to-[#8d2594]" />
				<input
					type="range"
					aria-label="最小值"
					defaultValue={0}
					className={clsx(rangeInput, "[&::-webkit-slider-thumb]:border-[#2bb7f7]")}
				/>
				<input
					type="range"
					aria-label="最大值"
					defaultValue={100}
					className={clsx(rangeInput, "[&::-webkit-slider-thumb]:border-[#8d2594]")}
				/>
			</div>
		</div>
	</div>
);

const ComponentPanel = () => (
	<main className="flex min-w-0 flex-1 flex-col px-2 pt-[9px] pb-[9px]">
		<div className="flex flex-col gap-[9px]">
			{axes.map((a) => (
				<AxisRow key={a.label} axis={a} />
			))}
		</div>
		<label className="flex h-[37px] items-center justify-end gap-[6px]">
			<input
				type="checkbox"
				className="size-4 appearance-none rounded-[2px] border border-[#0b1f44] bg-white"
			/>
			手动预览
		</label>
		<div className="mr-px flex flex-1 flex-col border border-[#e3e6ee] px-[15px]">
			<h2 className="flex h-12 items-center pb-[6px] pl-[2px]">组件</h2>
			<div className="relative min-h-[300px] flex-1 overflow-hidden bg-[#b0cdff]">
				<FlowMap />
				<MapControls />
			</div>
			<Legend />
			<div className="mt-[23px] mb-[5px] flex h-6 items-center gap-[6px] pl-[3px]">
				<label className="flex items-center gap-[7px]">
					<span className="relative flex">
						<input
							type="checkbox"
							defaultChecked
							className="size-4 appearance-none rounded-[2px] checked:bg-[#2b5fdb]"
						/>
						<Check size={14} strokeWidth={3} className="pointer-events-none absolute top-px left-px text-white" />
					</span>
					查看所有数据
				</label>
				<Icon>
					<circle cx="8" cy="8" r="7.300" />
					<path d="M8 7v5.500M8 3.800v1.500" strokeWidth="1.500" />
				</Icon>
			</div>
		</div>
	</main>
);

/* ---------- line settings popup ---------- */

const Segmented = ({
	options,
	active,
	disabled,
	marked,
}: {
	options: string[];
	active: number;
	disabled?: boolean;
	marked?: boolean;
}) => (
	<div
		className={clsx(
			"flex h-[27px] w-[148px] divide-x rounded-[2px] border",
			disabled ? "divide-[#e6e8ee] border-[#e6e8ee]" : "divide-[#2b5fdb] border-[#2b5fdb]",
		)}
	>
		{options.map((o, i) => (
			<button
				key={o}
				disabled={disabled}
				className={clsx(
					"relative flex-1 pb-px",
					disabled && (i === active ? "bg-[#ced1d9] text-white" : "text-[#c3c7d0]"),
					!disabled && (i === active ? "bg-[#2b5fdb] text-white" : "text-[#2b5fdb]"),
				)}
			>
				{o}
				{marked && i === active && (
					<span className="absolute -inset-[4px] z-10 border-4 border-[#fd4040]" />
				)}
			</button>
		))}
	</div>
);

const SettingRow = ({
	label,
	disabled,
	className,
	children,
}: {
	label: string;
	disabled?: boolean;
	className?: string;
	children: ReactNode;
}) => (
	<div className={clsx("flex h-[27px] items-center justify-between", className)}>
		<span className={clsx("pb-[2px]", disabled && "text-[#c3c7d0]")}>{label}</span>
		{children}
	</div>
);

const LinePopup = () => (
	<div className="absolute top-[528px] left-[521px] z-10 w-[244px] rounded-md bg-white px-[17px] pb-3 shadow-[0_0_8px_rgba(0,0,0,0.22)]">
		<label className="flex h-[46px] items-center gap-[10px] border-b border-[#d5d8de] pb-1 text-[#c3c7d0]">
			转化为雷达图
			<input
				type="checkbox"
				disabled
				className="size-4 appearance-none rounded-[2px] border border-[#dfe1ea] bg-[#f3f4f9]"
			/>
		</label>
		<SettingRow label="样式" className="mt-[11px]">
			<Segmented options={["折线", "曲线", "垂直"]} active={1} marked />
		</SettingRow>
		<SettingRow label="极坐标轴" disabled className="mt-[11px]">
			<Segmented options={["圆形", "多边形"]} active={0} disabled />
		</SettingRow>
		<SettingRow label="线型" className="mt-4">
			<div className="relative flex h-7 w-[148px] items-center border-b border-[#d5d8de] pl-1">
				<span className="h-[2px] w-[58px] bg-[#d5d8de]" />
				<select aria-label="线型" className="flex-1 appearance-none bg-transparent pl-4">
					<option>实线</option>
				</select>
				<ChevronDown size={18} strokeWidth={1.5} className="pointer-events-none absolute right-1" />
			</div>
		</SettingRow>
		<SettingRow label="标记点" className="mt-[23px]">
			<Segmented options={["有", "无"]} active={1} marked />
		</SettingRow>
		<SettingRow label="空值效果" className="mt-[17px]">
			<Segmented options={["连续", "断开", "置0"]} active={0} />
		</SettingRow>
		<Marker n={2} className="top-[50px] left-[243px]" />
		<Marker n={3} className="top-[182px] left-[253px]" />
	</div>
);

/* ---------- bottom bar ---------- */

const addIcons = [
	{
		name: "添加组件",
		color: "text-[#2a6b68]",
		art: <path d="M9.500 13.500h-8v-12h12v8M1.500 4h12M4.500 11V8M7.500 11V6.500M10.500 10V8M13.500 11v5M11 13.500h5" />,
	},
	{
		name: "添加仪表板",
		color: "text-[#4a37a8]",
		art: <path d="M10 13.500H1.500v-12h12v9M1.500 9.500h12M9.500 1.500v8M9.500 5.500h4M5.500 9.500v4M13.500 11v5M11 13.500h5" />,
	},
	{
		name: "添加报告",
		color: "text-[#4266b0]",
		art: (
			<>
				<path d="M6 4h6v4H6z" fill="#a9c3f2" stroke="none" />
				<path d="M10 14.500H1.500v-13h12v9M4 1.500v13M6 10h5.500M6 12h3.500M13.500 11v5M11 13.500h5" />
			</>
		),
	},
];

const BottomBar = () => (
	<footer className="flex h-11 shrink-0 bg-[#edf0f6]">
		<button className="flex w-[158px] items-center gap-[10px] border-t border-[#cdd1de] pb-[9px] pl-[53px] font-medium">
			<Icon>
				<ellipse cx="8" cy="3.500" rx="6" ry="2.500" />
				<path d="M2 3.500v9q0 2.500 6 2.500t6-2.500v-9M2 8q0 2.500 6 2.500t6-2.500" />
			</Icon>
			数据
		</button>
		<button className="flex h-9 w-[245px] items-center gap-[5px] rounded-b-md border border-t-0 border-[#cdd1de] bg-white pb-[2px] pl-[7px] font-medium">
			<Icon className="text-[#2a6b68]">
				<path d="M1.500 1.500h13v13h-13zM1.500 4.500h13M4.500 12.500V9M7.500 12.500V7M10 12.500V10M12.500 12.500V8" />
			</Icon>
			组件
		</button>
		<div className="flex flex-1 items-center border-t border-[#cdd1de] pb-2 pl-[22px]">
			<div className="flex gap-[19px]">
				{addIcons.map((a) => (
					<button key={a.name} aria-label={a.name}>
						<Icon size={18} className={a.color}>
							{a.art}
						</Icon>
					</button>
				))}
			</div>
			<button
				aria-label="展开"
				className="relative mr-[14px] ml-auto flex size-4 items-center justify-center rounded-full border border-[#3d4d6b]"
			>
				<ChevronUp size={10} />
				<span className="absolute top-0 -left-4 h-[14px] border-l border-[#cdd1de]" />
			</button>
		</div>
	</footer>
);

export default function App() {
	return (
		<div className="relative flex h-screen min-h-[860px] flex-col bg-white font-['Noto_Sans_CJK_SC',sans-serif] text-sm font-[350] text-[#0b1f44]">
			<header className="flex h-[47px] shrink-0 items-center border-t border-b border-t-[#dde1e2] border-b-[#dfe3ea] bg-[#edf0f6]">
				<button
					aria-label="退出"
					className="flex h-full w-[73px] items-center justify-center border-r border-[#dfe3ea]"
				>
					<ExitIcon />
				</button>
				<h1 className="ml-[22px] font-bold">春运1</h1>
				<button aria-label="更多" className="ml-[22px]">
					<Icon>
						<path d="M8 3v1.500M8 7.300v1.500M8 11.500v1.500" strokeWidth="1.500" />
					</Icon>
				</button>
				<a href="#lineage" className="mr-[21px] ml-auto flex items-center gap-[10px]">
					<LineageIcon />
					血缘视图
				</a>
			</header>
			<nav className="flex h-[41px] shrink-0 items-center gap-[19px] border-b border-[#e3e6ee] pb-[2px] pl-[15px]">
				{tools.map((t) => (
					<button
						key={t.label}
						disabled={t.disabled}
						className={clsx("flex items-center gap-[6px]", t.disabled && "text-[#c3c7d0]")}
					>
						{t.icon}
						{t.label}
					</button>
				))}
			</nav>
			<div className="relative flex min-h-0 flex-1">
				<FieldPanel />
				<ChartPanel />
				<ComponentPanel />
				<div className="absolute top-[366px] left-[254px]">
					<Dots vertical />
				</div>
			</div>
			<BottomBar />
			<Marker n={1} className="top-[577px] left-[310px]" />
			<LinePopup />
		</div>
	);
}
